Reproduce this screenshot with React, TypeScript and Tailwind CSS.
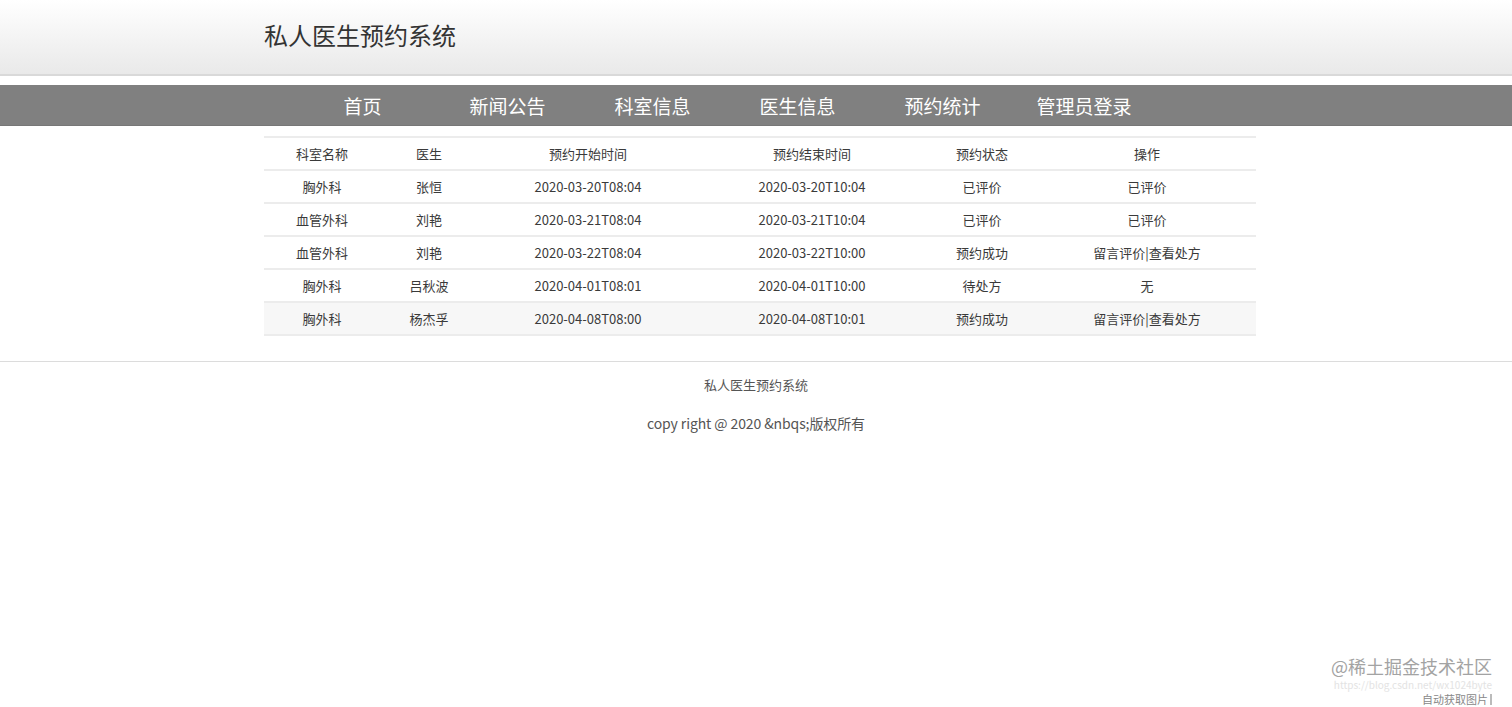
import React from 'react';

const navItems = [
  { label: '首页', w: 'w-[145px]' },
  { label: '新闻公告', w: 'w-[145px]' },
  { label: '科室信息', w: 'w-[145px]' },
  { label: '医生信息', w: 'w-[145px]' },
  { label: '预约统计', w: 'w-[145px]' },
  { label: '管理员登录', w: 'w-[138px]' },
];

const rows = [
  ['胸外科', '张恒', '2020-03-20T08:04', '2020-03-20T10:04', '已评价', '已评价'],
  ['血管外科', '刘艳', '2020-03-21T08:04', '2020-03-21T10:04', '已评价', '已评价'],
  ['血管外科', '刘艳', '2020-03-22T08:04', '2020-03-22T10:00', '预约成功', '留言评价|查看处方'],
  ['胸外科', '吕秋波', '2020-04-01T08:01', '2020-04-01T10:00', '待处方', '无'],
  ['胸外科', '杨杰孚', '2020-04-08T08:00', '2020-04-08T10:01', '预约成功', '留言评价|查看处方'],
];

const colWidths = ['w-[116px]', 'w-[98px]', 'w-[220px]', 'w-[228px]', 'w-[112px]', 'w-[218px]'];

const font = { fontFamily: '"Microsoft YaHei", "Noto Sans CJK SC", "Noto Sans", sans-serif' };

const App = () => {
  return (
    <div className="relative min-h-[707px] overflow-hidden bg-white text-[#3a3a3a]" style={font}>
      {/* Header */}
      <header className="h-[76px] border-b-2 border-[#d9d9d9] bg-gradient-to-b from-white to-[#e9e9e9]">
        <div className="ml-[264px] w-[992px] pt-[19px]">
          <h1 className="text-[24px] leading-[32px] text-[#333]">私人医生预约系统</h1>
        </div>
      </header>

      {/* Nav */}
      <nav className="mt-[9px] h-[41px] border-b border-[#777] bg-[#808080]">
        <ul className="ml-[264px] flex w-[992px] pl-[26px]">
          {navItems.map((item) => (
            <li
              key={item.label}
              className={`${item.w} text-center text-[19px] leading-[41px] text-white`}
            >
              {item.label}
            </li>
          ))}
        </ul>
      </nav>

      {/* Table */}
      <div className="ml-[264px] mt-[10px] w-[992px]">
        <table className="w-full border-collapse text-[13px] text-[#3a3a3a]">
          <thead>
            <tr className="h-[33px] border-y-2 border-[#ececec]">
              {['科室名称', '医生', '预约开始时间', '预约结束时间', '预约状态', '操作'].map((h, i) => (
                <th key={h} className={`${colWidths[i]} text-center font-normal`}>
                  {h}
                </th>
              ))}
            </tr>
          </thead>
          <tbody>
            {rows.map((r, ri) => (
              <tr
                key={ri}
                className={`h-[33px] border-b-2 border-[#ececec] ${ri === rows.length - 1 ? 'bg-[#f7f7f7]' : ''}`}
              >
                {r.map((c, ci) => (
                  <td key={ci} className="text-center">
                    {c}
                  </td>
                ))}
              </tr>
            ))}
          </tbody>
        </table>
      </div>

      {/* Footer */}
      <footer className="mt-[25px] border-t border-[#dcdcdc] pt-[13px] text-center text-[#555]">
        <p className="text-[13px] leading-[20px]">私人医生预约系统</p>
        <p className="mt-[18px] text-[14px] leading-[20px] tracking-[-0.1px]">copy right @ 2020 &amp;nbqs;版权所有</p>
      </footer>

      {/* Watermark */}
      <div className="absolute bottom-[1px] right-[20px] flex flex-col items-end gap-[1px]">
        <span className="text-[18px] leading-[24px] text-[#a3a3a3]">@稀土掘金技术社区</span>
        <span className="text-[10px] leading-[12px] text-[#e3e3e3]">https://blog.csdn.net/wx1024byte</span>
        <span className="flex items-center text-[11px] leading-[14px] text-[#888]">
          自动获取图片<span className="ml-[2px] h-[11px] w-[2px] bg-[#bbb]" />
        </span>
      </div>
    </div>
  );
};

export default App;
